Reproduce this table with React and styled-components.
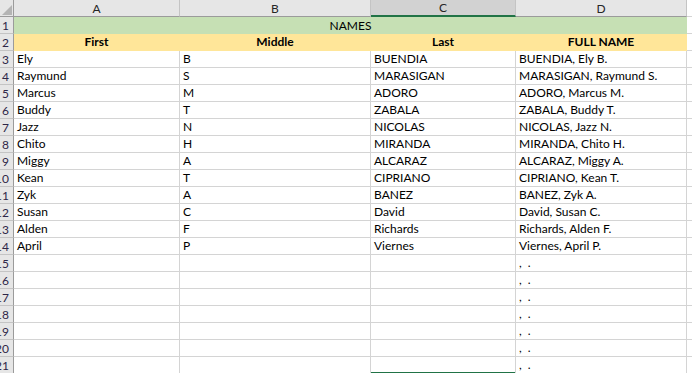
import React from "react";
import styled, { createGlobalStyle, css } from "styled-components";

const GlobalStyle = createGlobalStyle`
  html, body {
    margin: 0;
    padding: 0;
    background: #ffffff;
    overflow: hidden;
  }
  body {
    font-family: Lato, "Liberation Sans", sans-serif;
  }
`;

const COLUMNS = ["A", "B", "C", "D"];
const SELECTED_COL = "C";

const people = [
  ["Ely", "B", "BUENDIA", "BUENDIA, Ely B."],
  ["Raymund", "S", "MARASIGAN", "MARASIGAN, Raymund S."],
  ["Marcus", "M", "ADORO", "ADORO, Marcus M."],
  ["Buddy", "T", "ZABALA", "ZABALA, Buddy T."],
  ["Jazz", "N", "NICOLAS", "NICOLAS, Jazz N."],
  ["Chito", "H", "MIRANDA", "MIRANDA, Chito H."],
  ["Miggy", "A", "ALCARAZ", "ALCARAZ, Miggy A."],
  ["Kean", "T", "CIPRIANO", "CIPRIANO, Kean T."],
  ["Zyk", "A", "BANEZ", "BANEZ, Zyk A."],
  ["Susan", "C", "David", "David, Susan C."],
  ["Alden", "F", "Richards", "Richards, Alden F."],
  ["April", "P", "Viernes", "Viernes, April P."],
];

const emptyRows = 8;

const Sheet = styled.div`
  display: grid;
  grid-template-columns: 14px 166px 191px 145px 171px 1fr;
  grid-auto-rows: 17px;
  width: 692px;
  height: 373px;
  overflow: hidden;
  color: #000;
`;

const Corner = styled.div`
  position: relative;
  background: #e6e6e6;
  border-right: 1px solid #9b9b9b;
  border-bottom: 1px solid #9b9b9b;
  box-sizing: border-box;
  overflow: hidden;

  svg {
    position: absolute;
    right: 1px;
    bottom: 1px;
  }
`;

const ColHeader = styled.div`
  display: flex;
  align-items: center;
  justify-content: center;
  box-sizing: border-box;
  background: ${(p) => (p.$selected ? "#d2d2d2" : "#e6e6e6")};
  border-right: 1px solid #c4c4c4;
  border-bottom: ${(p) =>
    p.$selected ? "2px solid #217346" : "1px solid #9b9b9b"};
  font-size: 12px;
  color: #262626;
  line-height: 1;
  padding-top: 1px;
  ${(p) =>
    p.$blank &&
    css`
      background: #ffffff;
      border-bottom: 1px solid #d4d4d4;
      border-right: none;
    `}
`;

const RowHeader = styled.div`
  display: flex;
  align-items: center;
  justify-content: flex-end;
  box-sizing: border-box;
  padding-right: 4px;
  background: #e6e6e6;
  border-right: 1px solid #9b9b9b;
  border-bottom: 1px solid #c4c4c4;
  font-size: 12px;
  color: #2f2748;
  overflow: hidden;
  white-space: nowrap;

  span {
    flex: none;
  }
`;

const Banner = styled.div`
  grid-column: 2 / span 4;
  display: flex;
  align-items: flex-end;
  justify-content: center;
  box-sizing: border-box;
  background: #c6e0b4;
  font-size: 12px;
  line-height: 15px;
  padding-bottom: 1px;
`;

const Cell = styled.div`
  display: flex;
  align-items: flex-end;
  box-sizing: border-box;
  padding: 0 3px 1px;
  font-size: 12px;
  line-height: 15px;
  white-space: pre;
  overflow: hidden;
  border-right: 1px solid #d4d4d4;
  border-bottom: 1px solid #d4d4d4;
  background: #ffffff;

  ${(p) =>
    p.$head &&
    css`
      background: #ffe699;
      justify-content: center;
      font-weight: 700;
      border-right-color: #ffe699;
      border-bottom-color: #ffe699;
    `}

  ${(p) =>
    p.$fill &&
    css`
      border-right: none;
    `}

  ${(p) =>
    p.$selectAbove &&
    css`
      border-bottom: 1px solid #217346;
      box-shadow: inset 0 -1px 0 #217346;
    `}
`;

function CornerTriangle() {
  return (
    <svg width="10" height="10" viewBox="0 0 10 10">
      <polygon points="10,0 10,10 0,10" fill="#b4b4b4" />
    </svg>
  );
}

function App() {
  const rows = [
    ...people,
    ...Array.from({ length: emptyRows }, () => ["", "", "", ",  ."]),
  ];
  const lastVisible = 21;

  return (
    <>
      <GlobalStyle />
      <Sheet>
        <Corner>
          <CornerTriangle />
        </Corner>
        {COLUMNS.map((c) => (
          <ColHeader key={c} $selected={c === SELECTED_COL}>
            {c}
          </ColHeader>
        ))}
        <ColHeader $blank />

        <RowHeader>
          <span>1</span>
        </RowHeader>
        <Banner>NAMES</Banner>
        <Cell $fill />

        <RowHeader>
          <span>2</span>
        </RowHeader>
        {["First", "Middle", "Last", "FULL NAME"].map((h) => (
          <Cell key={h} $head>
            {h}
          </Cell>
        ))}
        <Cell $fill />

        {rows.map((r, i) => {
          const rowNum = i + 3;
          return (
            <React.Fragment key={rowNum}>
              <RowHeader>
                <span>{rowNum}</span>
              </RowHeader>
              {r.map((v, j) => (
                <Cell
                  key={j}
                  $selectAbove={rowNum === lastVisible && COLUMNS[j] === SELECTED_COL}
                >
                  {v}
                </Cell>
              ))}
              <Cell $fill />
            </React.Fragment>
          );
        })}
      </Sheet>
    </>
  );
}

export default App;
